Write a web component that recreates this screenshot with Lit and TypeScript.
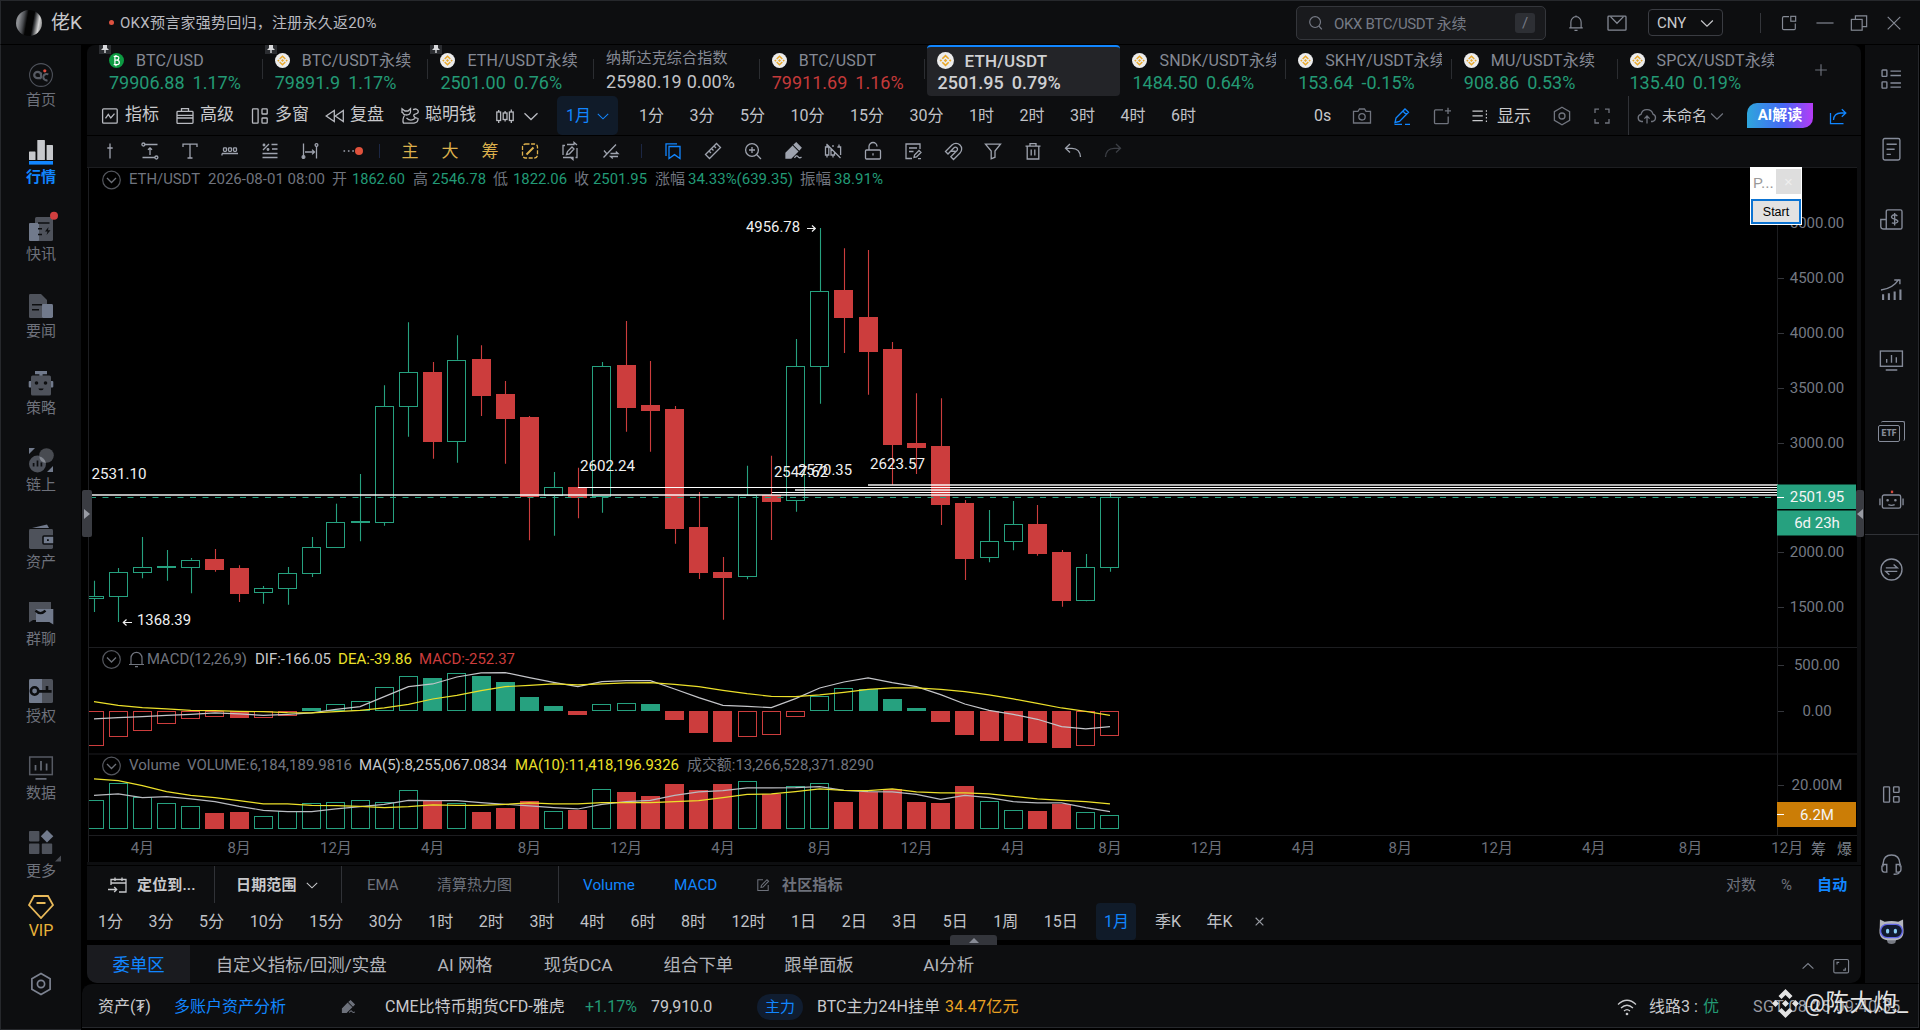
import { LitElement, html, svg, css } from "lit";
import { customElement } from "lit/decorators.js";

/* ---------- icons, drawn on a 20x20 grid ---------- */
const ICONS: Record<string, unknown> = {
  search: svg`<circle cx="9" cy="9" r="6"/><path d="M13.4 13.6L16.5 17"/>`,
  bell: svg`<path d="M2.5 15.5H17.5M4.3 15.5V9.2a5.7 6.2 0 0 1 11.4 0v6.3M8.3 18.2h3.4M10 3V1.6"/>`,
  mail: svg`<rect x="1" y="3.2" width="18" height="14" rx=".8"/><path d="M3.5 3.6L10 10.2L16.5 3.6"/>`,
  down: svg`<path d="M3.5 7.2L10 13.5L16.5 7.2"/>`,
  up: svg`<path d="M4 13L10 7.2L16 13"/>`,
  detach: svg`<path d="M10 3H4.2Q2.8 3 2.8 4.4V16Q2.8 17.3 4.2 17.3H15.8Q17 17.3 17 16V10.5"/><rect x="12" y="2.6" width="5.4" height="5.4"/>`,
  min: svg`<path d="M.5 10H19.5"/>`,
  restore: svg`<rect x="1.5" y="6" width="12" height="12"/><path d="M6 6V2H18.5V14H13.5"/>`,
  close: svg`<path d="M3 3.2L17 17M17 3.2L3 17"/>`,
  plus: svg`<path d="M10 3.5V16.5M3.5 10H16.5"/>`,
  indicator: svg`<rect x="2.6" y="2.8" width="14.6" height="14.4" rx="1"/><path d="M5.5 12.3L8.3 8.3L10.8 12L14.5 7.6"/>`,
  brief: svg`<rect x="2" y="5.4" width="16" height="12" rx=".8"/><path d="M6.5 5.2V2.6H13.5V5.2M2 9.3H18M2 12H18"/>`,
  windows: svg`<rect x="2.5" y="2.8" width="5.6" height="14.4" rx=".6"/><rect x="12" y="2.8" width="5.2" height="5.2" rx=".6"/><rect x="12" y="12" width="5.2" height="5.2" rx=".6"/>`,
  rewind: svg`<path d="M9.3 4.5V15.5L1.2 10ZM18.3 4.5V15.5L10.3 10Z"/>`,
  smart: svg`<path d="M2 7V2.8L5 5H8L10.5 2.8V6Q10 9 6.5 9T2.6 6M13 3.6q4-1.6 5 1t-2 3.2-2 2.6 3.4 1.6M4.5 9.5Q2 13.5 3.5 17.2H14Q18.5 16.5 18 12.2M6.5 12q4 4 8.5 .5"/>`,
  candles: svg`<rect x="1.8" y="6" width="3.8" height="8.5"/><rect x="8.2" y="7" width="3.8" height="6.5"/><rect x="14.4" y="6" width="3.8" height="8.5"/><path d="M3.7 4V6M3.7 14.5V17M10.1 5V7M10.1 13.5V15.5M16.3 3.5V6M16.3 14.5V17"/>`,
  camera: svg`<path d="M1.5 5.3H6L7.5 3H12.5L14 5.3H18.5V17H1.5Z"/><circle cx="10" cy="10.8" r="3.2"/>`,
  pen: svg`<path d="M4 12L13 3L16.5 6.2L7.5 15.4L3 16.5ZM11 5.2L14.3 8.5M2.5 18.3H10M13 18.3H18"/>`,
  notePlus: svg`<path d="M11 3.8H3.5Q2.5 3.8 2.5 5V16.5Q2.5 17.7 3.6 17.7H15Q16.2 17.7 16.2 16.5V10.5M16 1.8V8M12.9 4.9H19"/>`,
  list: svg`<path d="M.5 4.5H12M.5 9.8H12M.5 15.2H12"/><path stroke-dasharray="1.8 2" d="M16 3.5V17"/>`,
  hex: svg`<path d="M10 1.3L17.6 5.6V14.4L10 18.7L2.4 14.4V5.6Z"/><circle cx="10" cy="10" r="3"/>`,
  full: svg`<path d="M3 7V3.2H7M13 3.2H17V7M17 13V17H13M7 17H3V13"/>`,
  cloud: svg`<path d="M6 15.5H4.5A3.6 3.6 0 0 1 4 8.4 6.2 6.2 0 0 1 16 8.2 3.8 3.8 0 0 1 15.5 15.5H14M10 17.5V10.2M7.4 12.6L10 10L12.6 12.6"/>`,
  share: svg`<path d="M2.5 7V17.6H15.5M5.5 14Q6 7 13 7H17.6M13.8 3.2L17.8 7L13.8 10.8"/>`,
  cross: svg`<path d="M10 2.5V17.5M7.3 7H12.7"/>`,
  span: svg`<path d="M4.5 3.5H17.5M2.5 16.5H15M10 7V14M8 8.8L10 6.8L12 8.8"/><circle cx="3.4" cy="3.5" r="1.5"/><circle cx="16.4" cy="16.5" r="1.5"/>`,
  textT: svg`<path d="M3 6V3.2H17V6M10 3.2V17M7.5 17H12.5"/>`,
  brush: svg`<path d="M2 12.5H18M2 12.5V14.5"/><rect x="3.5" y="6.8" width="3" height="3.5" rx=".8"/><rect x="8.5" y="6.8" width="3" height="3.5" rx=".8"/><rect x="13.5" y="6.8" width="3" height="3.5" rx=".8"/>`,
  ratio: svg`<path d="M2.5 16.5H17.5M2.5 12.5H17.5M12 8H17.5M11.5 3.5H17.5M3 9L9 3"/><circle cx="4" cy="4" r=".8"/><circle cx="8" cy="8.5" r=".8"/>`,
  width: svg`<path d="M3.5 2.5V17.5M16.5 5V17.5M5 11H14.5M12 8.6L14.5 11L12 13.4"/><circle cx="3.5" cy="16" r="1.4"/><circle cx="16.5" cy="4" r="1.4"/>`,
  dots: svg`<path stroke-dasharray="1.6 2.8" d="M3.5 10H16"/>`,
  slashBox: svg`<rect x="2.5" y="3" width="15" height="14" rx="3" stroke-dasharray="4 1.6"/><path stroke-width="2" d="M6.5 13.5L13.5 6.5"/>`,
  copyPen: svg`<path d="M7 3.5H14V1.5L17 4M5 4.5H3V14M3 16.5H13V18.5L10 16M17 7V16.5H15.5M6.5 13.5L7.5 10.5L12 6L14 8L9.5 12.8Z"/>`,
  swapLine: svg`<path d="M3.5 16.5L16 3.5M10.5 12.5H18L15.8 10.5M18 15.5H10.5L12.8 17.5M4 9.5L7 13"/>`,
  bookmark: svg`<path d="M3 15V2.8H14"/><path d="M6 5.5H17V17.5L11.5 13.6L6 17.5Z"/>`,
  ruler: svg`<path d="M2.5 13.5L13.5 2.5L17.5 6.5L6.5 17.5ZM6 10L8 12M8.5 7.5L10.5 9.5M11 5L13 7"/>`,
  zoomIn: svg`<circle cx="9" cy="9" r="6.4"/><path d="M13.8 13.8L18 18M9 6V12M6 9H12"/>`,
  marker: svg`<path fill="currentColor" d="M9.6 5.4L14.6 10.4L8 17H3V12ZM11.2 3.8L13.2 2L18 6.8L16.2 8.8Z"/><path d="M11.5 17Q13.5 13.5 15 15.6T18.5 16"/>`,
  noCandle: svg`<path d="M2.5 6H5.8V14H2.5ZM4 4V6M4 14V16.5M8 7.5V14H11.5V11M10 14V16.5M10 4V6M14.4 6H17.6V14M16 3.5V6M3.5 3L17.5 17"/>`,
  lock: svg`<rect x="2.5" y="9" width="15" height="9" rx="1"/><path d="M6 9V5.5a4 4 0 0 1 8 0M10 12.2V14.6"/>`,
  noteEdit: svg`<path d="M17 8V3H3V17.5H9M6 7H14M6 10.5H10.5M11 16.5L11.5 14L16 9.5L18 11.5L13.5 16ZM15 17.7H18"/>`,
  magnet: svg`<path d="M2.5 10.5L9 4A5.6 5.6 0 0 1 17 12L10.5 18.5L7.8 15.8L14 9.5A2 2 0 0 0 11 6.8L5 13ZM8 10L13 10.5"/>`,
  funnel: svg`<path d="M2.5 3.2H17.5L12 10V16.2L8.2 17.8V10Z"/>`,
  trash: svg`<path d="M2.5 5.2H17.5M4.2 5.2V18H15.8V5.2M7 5V2.6H13V5M8.2 8.5V14.5M11.8 8.5V14.5"/>`,
  undo: svg`<path d="M7 3L2.5 7.3L7 11.5M2.8 7.3H9Q17 7.5 17.5 16"/>`,
  redo: svg`<path d="M13 3L17.5 7.3L13 11.5M17.2 7.3H11Q3 7.5 2.5 16"/>`,
  goto: svg`<path d="M3 10V4.5H18V17H11M3 8H18M7 2.5V6M14 2.5V6M0 14.5H8.5M6.2 12L8.7 14.5L6.2 17"/>`,
  editBox: svg`<path d="M10 3.5H3.5V17H16.5V10M7.5 13L8 10.5L15 3.3L17 5.2L10 12.5Z"/>`,
  expandBox: svg`<rect x="2" y="2.8" width="16.4" height="14.8" rx="1.6"/><path d="M5.6 8.4V6H8M14.8 12V14.5H12.3"/>`,
  wifi: svg`<path d="M1 7.5Q10-1 19 7.5M4 11Q10 5.5 16 11M7 14Q10 11.3 13 14"/><circle cx="10" cy="17" r=".7"/>`,
  /* right rail */
  rList: svg`<rect x="1" y="1" width="4.6" height="6" rx=".6"/><rect x="1" y="12.2" width="4.6" height="6" rx=".6"/><path d="M9 2H19M9 6.2H19M9 13.3H19M9 17.3H19"/>`,
  rDoc: svg`<rect x="2" y="-.5" width="16" height="20.5" rx="1.6"/><path d="M5.3 5H15M5.3 9.8H13M5.3 14.6H9.4"/>`,
  rMoney: svg`<path d="M5 18.7V2.5Q5 .8 6.6 .8H18.5Q20 .8 20 2.4V17.5Q20 19 18.4 19H2.4Q.2 19-.2 17V10H5"/><path d="M15.6 6.5Q12.6 4.5 10.6 6.4T13 9.7 15.5 12.6 10.3 13.2M13 3.8V15.6"/>`,
  rTrend: svg`<path stroke-width="2" d="M2 19V13.5M7.5 19V12.5M13 19V11M18.5 19V9"/><path d="M0 9.5Q11 8.5 17-.5M12.6 0H18V4"/>`,
  rScreen: svg`<rect x="-.6" y="1" width="21" height="14.5"/><path d="M5.4 8.5V12.2M10 4.8V12.2M14.6 7V12.2M4.5 19H15.5"/>`,
  rRobot: svg`<rect x="1.3" y="4.8" width="17.4" height="12.5" rx="1.6"/><path d="M-1 8V14.5M21 8V14.5M7 14Q10 15.4 13 14" /><circle cx="6.3" cy="9.8" r=".6"/><circle cx="13.7" cy="9.8" r=".6"/><path stroke="#d84a3e" stroke-width="2.2" d="M10.5 3V.6"/>`,
  rSwap: svg`<circle cx="10" cy="10" r="10"/><path d="M4.6 8.5H15.6L12 5.2M15.5 11.8H4.5L8 15"/>`,
  rHead: svg`<path d="M2 12V9Q2.5 1 10 1T18 9V12M1 10H5.5V17.2H3Q.9 17 .9 14.5V11M19 10H14.5V17.2H17Q19 17 19 14.5V11M17.5 17.2Q17 19.5 12 19.3"/>`,
  rFace: svg`<path fill="#777a83" stroke="none" d="M5 16H15L13.5 21Q10 23 6.5 21Z"/><path fill="#b4b6be" stroke="none" d="M-1-1.5L3.5 .6Q10-.8 16.5 .6L21-1.5L21.2 6Q23 17.5 14 18.3H6Q-3 17.5-1.2 6Z"/><rect x="-.4" y="3.2" width="20.8" height="12.6" rx="6.2" fill="#10192e" stroke="#6266e6" stroke-width="1.3"/><path stroke="#8ccdf2" stroke-width="3" stroke-linecap="round" d="M6.3 8.8V10.4M13.7 8.8V10.4"/>`,
};

const icon = (name: string, cls = "") =>
  html`<svg class="ic ${cls}" viewBox="0 0 20 20">${ICONS[name]}</svg>`;

/* ---------- left rail glyphs, 24x24 ---------- */
const D = "#4e525b";
const L = "#717a8c";
const K = "#0d0e10";
const RAIL: [string, unknown][] = [
  ["首页", svg`<circle cx="12" cy="12" r="11.4" fill="none" stroke="${D}" stroke-width="1.1"/><path d="M12 15.5V9.5M12 12a3.4 3.2 0 1 0-3.4 3.2H12" fill="none" stroke="#575b64" stroke-width="2.2"/><path d="M19.3 11.5A3.2 3.2 0 1 0 18.5 17.2" fill="none" stroke="#575b64" stroke-width="2"/><circle cx="15.8" cy="7.8" r="1.6" fill="#e04a3c"/>`],
  ["行情", svg`<rect x="0" y="11.5" width="6.5" height="8.5" rx=".6" fill="#c6c8cc"/><rect x="8.3" y="0" width="7.6" height="20" rx=".6" fill="#c6c8cc"/><rect x="17.6" y="5" width="6.4" height="15" rx=".6" fill="#c6c8cc"/><rect x="0" y="21" width="24" height="3.6" fill="#1186ff"/>`],
  ["快讯", svg`<rect x="6" y="0" width="18" height="24" rx="1.5" fill="${D}"/><rect x="0" y="6" width="10" height="18" rx="1" fill="${L}"/><path d="M9 6H20.5M9 11.7H13M9 17.5H13" stroke="${K}" stroke-width="1.6"/><path d="M19.5 10L16 14.6H18.5L17.5 18L21.5 13.2H19Z" fill="${K}"/><circle cx="25" cy="-1.3" r="4" fill="#d23f3f"/>`],
  ["要闻", svg`<path d="M1.2 0H12L18 6V24H1.2Q0 24 0 22.8V1.2Q0 0 1.2 0Z" fill="${D}"/><rect x="13" y="10" width="11" height="14" rx="1.4" fill="${L}"/><path d="M3 10.8H13M3 15.8H10" stroke="${K}" stroke-width="1.5"/>`],
  ["策略", svg`<path d="M6 1.6H18M12 1V5" stroke="${L}" stroke-width="3.2"/><rect x="-.3" y="10" width="24.6" height="6.5" rx="1" fill="${L}"/><rect x="2" y="4.6" width="20" height="20" rx="1.6" fill="${D}"/><circle cx="7.5" cy="12" r="1.8" fill="${K}"/><circle cx="16.5" cy="12" r="1.8" fill="${K}"/><path d="M9.3 17.4H14.7Q14 19.3 12 19.3T9.3 17.4Z" fill="${K}"/>`],
  ["链上", svg`<circle cx="17.5" cy="7.5" r="7.3" fill="#484b51"/><circle cx="8.5" cy="16" r="8.5" fill="${D}"/><path d="M10.3 8.5A7.3 7.3 0 0 0 16.8 15A8.5 8.5 0 0 0 10.3 8.5Z" fill="#858991"/><path d="M0 0H6L0 6ZM24 24V18L18 24Z" fill="${L}"/><path d="M4.6 18.5V15M8.5 18.5V12.5M12.4 18.5V14.6" stroke="${K}" stroke-width="1.7"/>`],
  ["资产", svg`<path d="M3 3L18-.6L20 3Z" fill="${L}"/><rect x="0" y="4" width="24" height="20" rx="1.4" fill="${D}"/><rect x="14" y="11" width="11" height="8" rx="1" fill="${L}" stroke="${K}" stroke-width="1.6"/><rect x="18" y="14.2" width="1.8" height="1.8" fill="${K}"/>`],
  ["群聊", svg`<path d="M0 0H22V18H4L0 20.4Z" fill="${D}"/><path d="M7 7H24.3V22.4L20.3 20H7Z" fill="${L}"/><path d="M6.5 8.6Q11.5 13.6 16.5 8.6" fill="none" stroke="${K}" stroke-width="2.3"/>`],
  ["授权", svg`<rect x="0" y="0" width="24" height="24" rx="1.6" fill="${D}"/><path d="M1.5 0H13V24H1.5Q0 24 0 22.5V1.5Q0 0 1.5 0Z" fill="${L}"/><circle cx="5.6" cy="12" r="3.7" fill="none" stroke="${K}" stroke-width="2.6"/><path d="M9 12.4H22.6M18 12V7" stroke="${K}" stroke-width="2.6"/>`],
  ["数据", svg`<rect x=".7" y="1" width="22.6" height="17.6" fill="none" stroke="#565a63" stroke-width="1.5"/><path d="M6.5 9V14.6M12 5V14.6M17.6 7.6V14.6M6.5 22.8H17.5" stroke="#656a75" stroke-width="1.7"/>`],
  ["更多", svg`<rect x="0" y="0" width="10.4" height="10.4" rx=".8" fill="${D}"/><rect x="0" y="12.6" width="10.4" height="10.4" rx=".8" fill="${D}"/><rect x="12.8" y="12.6" width="10.4" height="10.4" rx=".8" fill="${D}"/><path d="M18-1L24.3 5.2L18 11.4L11.8 5.2Z" fill="${L}"/><path d="M32 24.5V30.5H26Z" fill="#4a4d54"/>`],
];

/* ---------- market tabs ---------- */
type Tab = { name: string; price: string; pct: string; tone: string; kind: string; pin?: boolean };
const TABS: Tab[] = [
  { name: "BTC/USD", price: "79906.88", pct: "1.17%", tone: "g", kind: "bitstamp", pin: true },
  { name: "BTC/USDT永续", price: "79891.9", pct: "1.17%", tone: "g", kind: "bnb", pin: true },
  { name: "ETH/USDT永续", price: "2501.00", pct: "0.76%", tone: "g", kind: "bnb", pin: true },
  { name: "纳斯达克综合指数", price: "25980.19", pct: "0.00%", tone: "w", kind: "" },
  { name: "BTC/USDT", price: "79911.69", pct: "1.16%", tone: "r", kind: "bnb" },
  { name: "ETH/USDT", price: "2501.95", pct: "0.79%", tone: "w", kind: "active" },
  { name: "SNDK/USDT永续", price: "1484.50", pct: "0.64%", tone: "g", kind: "bnb" },
  { name: "SKHY/USDT永续", price: "153.64", pct: "-0.15%", tone: "g", kind: "bnb" },
  { name: "MU/USDT永续", price: "908.86", pct: "0.53%", tone: "g", kind: "bnb" },
  { name: "SPCX/USDT永续", price: "135.40", pct: "0.19%", tone: "g", kind: "bnb" },
];

const coin = (kind: string) =>
  kind === "bitstamp"
    ? html`<svg class="coin" viewBox="0 0 16 16"><circle cx="8" cy="8" r="8" fill="#0d9a42"/><path d="M5 3.5H8.6Q10.6 3.6 10.5 5.5T8.4 7.6H6.3M8.4 7.6Q11 7.7 11 10T8.6 12.3H5M6.3 3.5V12.3M7.4 2V3.6M7.4 12.3V14" fill="none" stroke="#fff" stroke-width="1.3"/></svg>`
    : html`<svg class="coin" viewBox="0 0 16 16"><circle cx="8" cy="8" r="8" fill="#ececec"/><g fill="none" stroke="#e8a82c" stroke-width="1.5"><path d="M5 6.4L8 3.4L11 6.4M5 9.6L8 12.6L11 9.6"/></g><path fill="#e8a82c" d="M8 6.4L9.6 8L8 9.6L6.4 8ZM3.6 6.8L4.8 8L3.6 9.2L2.4 8ZM12.4 6.8L13.6 8L12.4 9.2L11.2 8Z"/></svg>`;

/* ---------- chart data: y values are thirds of a pixel below each pane's origin ---------- */
const UP = "#26a17f";
const DN = "#cc3d3d";
const X0 = 94;
const STEP = 24.19;
const BODY = 18.4;
const cx = (i: number) => X0 + STEP * i;

// [high, body top, body bottom, low, rising]
const CANDLES: number[][] = [
  [1142, 1188, 1196, 1236, 1], [1104, 1117, 1189, 1266, 1], [1011, 1102, 1118, 1135, 1], [1050, 1098, 1102, 1142, 1],
  [1074, 1079, 1103, 1180, 1], [1047, 1078, 1108, 1115, 0], [1096, 1104, 1179, 1206, 0], [1158, 1165, 1178, 1211, 1],
  [1101, 1120, 1166, 1214, 1], [1011, 1042, 1121, 1131, 1], [911, 967, 1042, 1042, 1], [822, 963, 967, 1024, 1],
  [556, 619, 967, 977, 1], [367, 517, 619, 710, 1], [486, 516, 725, 776, 0], [406, 479, 724, 788, 1],
  [436, 477, 587, 648, 0], [543, 582, 654, 791, 0], [648, 651, 890, 1021, 0], [816, 862, 887, 1007, 1],
  [803, 861, 891, 955, 0], [486, 498, 888, 938, 1], [363, 496, 621, 695, 0], [483, 616, 632, 755, 0],
  [618, 628, 984, 1031, 0], [876, 981, 1118, 1137, 0], [1071, 1116, 1131, 1259, 0], [797, 885, 1130, 1138, 1],
  [767, 885, 903, 1020, 0], [417, 498, 900, 935, 1], [84, 273, 499, 611, 1], [145, 271, 353, 459, 0],
  [150, 351, 453, 584, 0], [426, 447, 732, 854, 0], [580, 729, 741, 822, 0], [595, 738, 912, 975, 0],
  [900, 909, 1074, 1140, 0], [930, 1023, 1073, 1087, 1], [903, 973, 1025, 1051, 1], [915, 972, 1059, 1067, 0],
  [1050, 1056, 1202, 1220, 0], [1062, 1102, 1200, 1204, 1], [879, 891, 1103, 1115, 1],
];

// [bar end, filled]
const MACD: number[][] = [
  [317, 0], [290, 0], [271, 0], [252, 0], [237, 0], [230, 0], [234, 1], [233, 0], [227, 0], [204, 1], [193, 0],
  [183, 0], [142, 0], [108, 0], [114, 1], [99, 0], [107, 1], [126, 1], [171, 1], [197, 1], [224, 1], [193, 0],
  [189, 0], [193, 1], [239, 1], [279, 1], [306, 1], [291, 0], [283, 0], [231, 0], [168, 0], [145, 0], [147, 1],
  [178, 1], [205, 1], [246, 1], [283, 1], [303, 1], [303, 1], [309, 1], [324, 1], [318, 0], [288, 0],
];
const DIF = [236, 232, 229, 225, 222, 218, 221, 225, 222, 218, 207, 199, 169, 139, 131, 110, 98, 97, 112, 126, 139, 124, 121, 121, 146, 172, 195, 198, 202, 175, 143, 125, 113, 127, 139, 163, 191, 210, 222, 237, 259, 266, 259];
const DEA = [184, 195, 202, 206, 210, 211, 213, 214, 217, 218, 214, 210, 203, 192, 176, 165, 151, 139, 135, 131, 134, 131, 128, 127, 132, 139, 150, 160, 168, 169, 164, 156, 147, 143, 143, 147, 154, 164, 176, 189, 203, 213, 225];
const VOL = [480, 430, 472, 490, 499, 519, 516, 528, 514, 490, 487, 479, 487, 449, 482, 490, 516, 504, 484, 514, 510, 446, 457, 468, 433, 449, 433, 424, 461, 438, 430, 486, 455, 447, 486, 489, 438, 484, 510, 513, 492, 517, 524];
const MA5 = [465, 461, 472, 469, 476, 484, 498, 510, 514, 514, 506, 499, 492, 480, 481, 481, 487, 492, 497, 502, 506, 492, 484, 480, 465, 455, 451, 443, 443, 442, 439, 450, 454, 455, 462, 477, 465, 472, 484, 488, 488, 502, 514];
const MA10 = [416, 421, 436, 454, 465, 472, 481, 491, 491, 495, 496, 498, 502, 499, 494, 495, 495, 492, 488, 491, 491, 487, 487, 487, 484, 481, 472, 462, 461, 454, 446, 450, 451, 446, 455, 458, 458, 461, 468, 476, 480, 484, 491];

const priceY = (v: number) => 200 + v / 3;
const paneY = (v: number) => 640 + v / 3;
const line = (vals: number[], color: string) =>
  svg`<polyline fill="none" stroke="${color}" stroke-width="1.2" points="${vals.map((v, i) => `${cx(i)},${paneY(v) + 0.3}`).join(" ")}"/>`;

const bar = (i: number, top: number, bottom: number, color: string, filled: boolean) => {
  const x = Math.round(cx(i) - BODY / 2 - 0.3);
  const t = Math.round(top);
  const h = Math.max(Math.round(bottom) - t, 2);
  return filled
    ? svg`<rect x="${x}" y="${t}" width="19" height="${h}" fill="${color}"/>`
    : svg`<rect x="${x + 0.5}" y="${t + 0.5}" width="18" height="${Math.max(h - 1, 1)}" fill="none" stroke="${color}"/>`;
};

const label = (x: number, y: number, w: number, text: string, color: string) =>
  svg`<text x="${x}" y="${y}" textLength="${w}" lengthAdjust="spacingAndGlyphs" fill="${color}">${text}</text>`;

const MUTED = "#70747e";
const HEAD: [number, number, string, string][] = [
  [129, 71, "ETH/USDT", MUTED], [208, 117, "2026-08-01 08:00", MUTED],
  [332, 15, "开", MUTED], [352, 53, "1862.60", "#229a76"],
  [413, 15, "高", MUTED], [432, 54, "2546.78", "#229a76"],
  [493, 15, "低", MUTED], [513, 54, "1822.06", "#229a76"],
  [574, 15, "收", MUTED], [593, 54, "2501.95", "#229a76"],
  [655, 30, "涨幅", MUTED], [688, 105, "34.33%(639.35)", "#229a76"],
  [800, 31, "振幅", MUTED], [834, 49, "38.91%", "#229a76"],
];

@customElement("price-chart")
export class PriceChart extends LitElement {
  static styles = css`
    :host { display: block; }
    svg { display: block; width: 1774px; height: 698px; font: 15px Roboto, "Noto Sans CJK SC", sans-serif; }
    .mid { text-anchor: middle; }
  `;

  render() {
    const months = ["4月", "8月", "12月"];
    const ticks: [number, string][] = [
      [222.8, "5000.00"], [278, "4500.00"], [333, "4000.00"], [388, "3500.00"], [443, "3000.00"],
      [552, "2000.00"], [607, "1500.00"], [665, "500.00"], [711, "0.00"], [784.5, "20.00M"],
    ];
    const circle = (y: number) => svg`<circle cx="111.5" cy="${y}" r="8.8" fill="none" stroke="#53565d" stroke-width="1.2"/><path d="M107 ${y - 2}L111.5 ${y + 2.5}L116 ${y - 2}" fill="none" stroke="#6c7078" stroke-width="1.3"/>`;
    return html`<svg viewBox="87 167 1774 698">
      <rect x="87" y="167" width="1774" height="698" fill="#0d0e10"/>
      <rect x="87" y="167" width="1770" height="695" fill="#000"/>
      <path d="M88.5 167V862M1777.5 167V835M87 167.5H1857M89 647.5H1857M89 754H1857M89 835.5H1857" stroke="#1c1d20" fill="none"/>
      <clipPath id="plot"><rect x="89" y="168" width="1689" height="667"/></clipPath>
      <g clip-path="url(#plot)">
        ${CANDLES.map(([h, t, b, l, up], i) => {
          const c = up ? UP : DN;
          return svg`<path d="M${Math.round(cx(i)) + 0.5} ${priceY(h)}V${priceY(t)}M${Math.round(cx(i)) + 0.5} ${priceY(b)}V${priceY(l)}" stroke="${c}" stroke-width="1.1"/>${bar(i, priceY(t), priceY(b) + 0.6, c, !up)}`;
        })}
        ${MACD.map(([e, f], i) => (e < 212 ? bar(i, paneY(e), 711, UP, !!f) : bar(i, 711, paneY(e) + 0.4, DN, !!f)))}
        ${line(DIF, "#c4c5c9")}${line(DEA, "#ece02a")}
        ${VOL.map((v, i) => bar(i, paneY(v), 829.4, CANDLES[i][4] ? UP : DN, !CANDLES[i][4]))}
        ${line(MA5, "#b9bbc0")}${line(MA10, "#ece02a")}
        <path d="M92 497.5H1778" stroke="#26a17f" stroke-dasharray="6 6.5" stroke-dashoffset="2"/>
        <path d="M92 495H1778M795 490H1778M868 485H1778" stroke="#fff" stroke-width="2" stroke-opacity=".7"/>
        <path d="M578 487.5H1778M772 492.5H1778" stroke="#fff"/>
      </g>
      ${circle(180)}
      ${HEAD.map(([x, w, t, c]) => label(x, 184, w, t, c))}
      ${circle(659.5)}
      <path d="M129 664.5H144M131 664.5V658a5.5 5.7 0 0 1 11 0V664.5M135 666.6H138" fill="none" stroke="#70747e" stroke-width="1.2"/>
      ${label(147, 663.5, 100, "MACD(12,26,9)", MUTED)}
      ${label(255, 663.5, 76, "DIF:-166.05", "#c9cacc")}
      ${label(338, 663.5, 74, "DEA:-39.86", "#ece02a")}
      ${label(419, 663.5, 96, "MACD:-252.37", DN)}
      ${circle(766)}
      ${label(129, 769.5, 51, "Volume", MUTED)}
      ${label(187, 769.5, 165, "VOLUME:6,184,189.9816", MUTED)}
      ${label(359, 769.5, 148, "MA(5):8,255,067.0834", "#c9cacc")}
      ${label(515, 769.5, 164, "MA(10):11,418,196.9326", "#ece02a")}
      ${label(687, 769.5, 187, "成交额:13,266,528,371.8290", MUTED)}
      ${label(91.5, 479, 55, "2531.10", "#f0f0f0")}
      ${label(580, 471, 55, "2602.24", "#f0f0f0")}
      ${label(774, 477, 54, "2547.62", "#f0f0f0")}
      ${label(798, 475, 54, "2570.35", "#f0f0f0")}
      ${label(870, 469, 55, "2623.57", "#f0f0f0")}
      ${label(746, 232, 54, "4956.78", "#f0f0f0")}
      ${label(137, 625, 54, "1368.39", "#f0f0f0")}
      <path d="M807 228.5H815M812 225.5L815.3 228.5L812 231.5M132 622.5H123.5M126.5 619.5L123.3 622.5L126.5 625.5" fill="none" stroke="#f0f0f0" stroke-width="1.2"/>
      ${Array.from({ length: 18 }, (_, k) => svg`<text class="mid" x="${cx(2 + 4 * k)}" y="853" fill="#6b6f79">${months[k % 3]}</text>`)}
      <text x="1811" y="854" fill="#7b808a">筹</text><text x="1837" y="854" fill="#7b808a">爆</text>
      ${ticks.map(([y, t]) => svg`<path d="M1778 ${Math.round(y) + 0.5}H1784" stroke="#34363b"/><text class="mid" x="1817" y="${y + 5.2}" fill="#747983">${t}</text>`)}
      <rect x="1777" y="484.5" width="79" height="24.5" fill="${UP}"/>
      <rect x="1777" y="510.5" width="79" height="25" fill="${UP}"/>
      <rect x="1777" y="802" width="79" height="25" fill="#cb7d06"/>
      <path d="M1777 497.5H1784M1777 814.5H1784" stroke="#fff"/>
      <text class="mid" x="1817" y="502" fill="#f4f4f4">2501.95</text>
      <text class="mid" x="1817" y="528.3" fill="#f4f4f4">6d 23h</text>
      <text class="mid" x="1817" y="819.5" fill="#f4f4f4">6.2M</text>
    </svg>`;
  }
}

const PERIODS = ["1分", "3分", "5分", "10分", "15分", "30分", "1时", "2时", "3时", "4时", "6时"];
const PERIODS2 = [...PERIODS, "8时", "12时", "1日", "2日", "3日", "5日", "1周", "15日"];

@customElement("app-root")
export class AppRoot extends LitElement {
  static styles = css`
    :host { display: block; width: 1920px; height: 1030px; overflow: hidden; position: relative; background: #000; color: #c8c9cc;
      font: 16px/20px Roboto, "Noto Sans CJK SC", sans-serif; }
    * { box-sizing: border-box; white-space: nowrap; }
    .ic { display: block; width: 20px; height: 20px; fill: none; stroke: currentColor; stroke-width: 1.3; overflow: visible; flex: none; }
    .s18 { width: 18px; height: 18px; }
    .s16 { width: 16px; height: 16px; }
    .s24 { width: 24px; height: 24px; stroke-width: 1.4; }
    .s10 { width: 11px; height: 11px; stroke-width: 2; margin-left: -4px; color: #9a9da5; }
    .blue { color: #1186ff; }
    .gold { color: #dcb04c; }
    .dim { color: #6d717b; }
    .faint { color: #3c3f45; }
    .g { color: #239a75; }
    .r { color: #c43a3a; }
    .w { color: #c3c4c7; }
    .amber { color: #eba423; letter-spacing: .2px; }
    .bold { font-weight: 600; }
    .frame { height: 1030px; display: grid; grid-template: 44px 985px 1px / 81px 1837px 2px; border-top: 0; }
    .row { display: grid; align-items: center; }

    .top { grid-column: 1 / 4; border-top: 1px solid #26282c; border-left: 1px solid #26282c; background: #0d0e10; padding-left: 15px;
      grid-template-columns: 35px 58px 11px 1176px 250px 21px 20px 20px 20px 21px 75px 37px 20px 20px 16px 34px 20px 15px 20px; color: #858a95; }
    .avatar { width: 26px; height: 26px; border-radius: 50%; background: linear-gradient(100deg, #8d8f93 0 14%, #4a4c50 30%, #050505 42% 62%, #3b3d40 68%, #d5d5d5 82%, #666 100%); }
    .brand { font-size: 19px; color: #c8c9cc; }
    .dot { width: 5px; height: 5px; border-radius: 50%; background: #de5240; }
    .notice { font-size: 15px; letter-spacing: .25px; color: #b9bac0; }
    .search { height: 34px; border: 1px solid #34363b; border-radius: 5px; background: #191a1d; padding: 0 10px; display: flex; align-items: center; font-size: 15px; color: #767a85; }
    .search .ic { margin-right: 9px; }
    .search span:not(.key) { letter-spacing: -.35px; padding-top: 3px; }
    .key { margin-left: auto; width: 20px; height: 20px; border-radius: 3px; background: #2d2f34; text-align: center; }
    .cny { height: 27px; border: 1px solid #3a3c42; border-radius: 4px; padding: 0 6px 0 8px; display: flex; align-items: center; justify-content: space-between; font-size: 15px; color: #c8c9cc; }
    .vline { width: 1px; height: 20px; background: #34363b; }

    .rail { grid-row: 2 / 4; border-left: 1px solid #26282c; border-bottom: 1px solid #26282c; border-top: 1px solid #000; background: #0d0e10; padding-top: 4px; display: flex; flex-direction: column; font-size: 15px; color: #6d717b; }
    .railitem { height: 77px; display: flex; flex-direction: column; align-items: center; padding-top: 14px; gap: 2.5px; flex: none; }
    .railitem svg { width: 24px; height: 24px; overflow: visible; flex: none; }
    .railitem:nth-child(2) { color: #1186ff; font-weight: 700; }
    .railitem:nth-child(11) { padding-top: 12px; gap: 6px; }
    .vip { height: 64px; flex: none; display: flex; flex-direction: column; align-items: center; gap: 2px; color: #e8b33a; font-size: 16px; margin-top: -1px; }
    .vip svg { width: 26px; height: 24px; }
    .gear { display: flex; justify-content: center; padding-top: 13px; color: #7c8290; }

    .stage { display: grid; grid-template: 939px 46px / 1783px 54px; padding-left: 1px; width: 1837px; }
    .center { padding: 1px 0 0 5px; width: 1779px; position: relative; }
    .panel { background: #0d0e10; }
    .head { width: 1774px; border-radius: 8px 8px 0 0; }

    .tabs { height: 51px; display: flex; padding-left: 10px; }
    .tab { width: 165.7px; height: 51px; display: grid; grid-template: 29px 18px / 27px 117px; padding: 1px 0 0 12px; position: relative; align-items: center; }
    .tab::after { content: ""; position: absolute; right: 0; top: 14px; height: 20px; width: 1px; background: #2b2d31; }
    .tab:nth-child(10)::after { display: none; }
    .tab .name { overflow: hidden; color: #858994; height: 22px; line-height: 22px; letter-spacing: .2px; }
    .tab .val { grid-column: 1 / 3; font-size: 18px; display: flex; gap: 8px; margin-top: -2px; }
    .tab .coin { width: 15px; height: 15px; }
    .tab.plain .name { grid-column: 1 / 3; font-size: 15px; margin-top: -5px; }
    .tab.plain .val { gap: 5px; margin-top: -4px; }
    .tab.active { width: 193px; background: #232428; border-top: 2px solid #1186ff; border-radius: 4px; padding: 0 0 0 10px; margin-left: 2px; margin-right: 0; grid-template-rows: 27px 20px; }
    .tab.active::after { display: none; }
    .tab.active .coin { width: 17px; height: 17px; }
    .tab.active .name, .tab.active .val { color: #cfd0d3; font-weight: 500; }
    .tab.active .name { font-size: 17px; }
    .pin { position: absolute; left: 2px; top: 0; width: 12px; height: 9px; background: #2b2d31; }
    .add { margin: 16px 0 0 29px; color: #6d717b; }

    .bar1 { height: 39px; padding: 0 13px; display: flex; align-items: center; }
    .menus { grid-template-columns: 25px 50px 25px 50px 25px 50px 25px 50px 25px 70px 26px 36px 61px; font-size: 17px; }
    .menus .ic { color: #b8bac0; }
    .menus > span { margin-top: -3px; }
    .cur { height: 39px; border-radius: 5px; background: #101b29; display: flex; align-items: center; justify-content: space-between; padding: 0 7px 0 9px; font-size: 16px; color: #1186ff; }
    .menus .cur .ic { color: #1186ff; }
    .times { display: flex; gap: 25.5px; padding-left: 21px; color: #c0c2c7; }
    .acts { margin-left: auto; grid-template-columns: 38px 40px 40px 40px 26px 54px 40px 36px 34px 46px 39px 81px 20px; color: #70747e; }
    .acts .lt { color: #c8c9cc; }
    .show { font-size: 17px; margin-left: -1px; }
    .unnamed { font-size: 15px; }
    .cloud { height: 39px; border-left: 1px solid #303237; display: flex; align-items: center; padding-left: 8px; }
    .ai { width: 66px; height: 25px; border-radius: 10px 0 10px 0; background: linear-gradient(90deg, #2ea6dc, #4668f5 55%, #b63bf6); color: #fff; font-weight: 700; font-size: 15px; line-height: 25px; text-align: center; }

    .bar2 { height: 32px; border-top: 1px solid #000; padding-left: 3px; padding-bottom: 1px; display: flex; align-items: center; color: #9ea3ae; }
    .cell { width: 40px; display: flex; justify-content: center; font-size: 17px; position: relative; }
    .sep { width: 1px; height: 14px; margin: 0 10px 0 9px; background: #1c2744; }
    .sep2 { margin: 0 11px; }
    .red { position: absolute; left: 25px; top: 6px; width: 8px; height: 8px; border-radius: 50%; background: #e0523c; }

    .popup { position: absolute; left: 1668px; top: 123px; width: 52px; height: 58px; background: #fff; padding: 2px 1px 1px 1px; font-family: "Liberation Sans", sans-serif; }
    .ptitle { height: 30px; display: flex; justify-content: space-between; color: #999; font-size: 15px; line-height: 28px; padding-left: 2px; }
    .px { width: 25px; height: 25px; background: #dedede; color: #eee; text-align: center; line-height: 25px; }
    .start { height: 25px; border: 2px solid #0b73d2; background: #e2e2e2; color: #000; font-size: 12.5px; line-height: 22px; text-align: center; }
    .handle { position: absolute; width: 10px; height: 47px; top: 446px; background: #3a3c42; border-radius: 2px; display: flex; align-items: center; justify-content: center; }
    .handle svg { width: 6px; height: 10px; }
    .hl { left: 0; }
    .hr { left: 1774px; width: 8px; }

    .low { width: 1774px; margin-top: 1px; height: 74px; position: relative; }
    .lrow1 { height: 37px; padding-left: 21px; grid-template-columns: 29px 77px 22px 68px 37px 26px 70px 121px 25px 91px 81px 27px 944px 55px 36px 32px; font-size: 15px; }
    .lrow1 .bold { letter-spacing: .15px; }
    .lrow1 .vl { width: 1px; height: 37px; background: #303237; }
    .lrow1 > .blue:not(.bold) { font-size: 15.3px; }
    .lrow2 { height: 37px; display: flex; align-items: center; gap: 25.55px; padding-left: 11px; color: #c0c2c7; }
    .lcur { width: 40px; height: 37px; line-height: 37px; text-align: center; background: #101b29; border-radius: 4px; color: #1186ff; margin: 0 -7px 0 -7px; }
    .grip { position: absolute; left: 863px; top: 69px; width: 47px; height: 10px; background: #33353b; border-radius: 3px 3px 0 0; display: flex; align-items: center; justify-content: center; }
    .grip svg { width: 10px; height: 5px; }

    .btabs { width: 1774px; margin-top: 5px; height: 38px; display: flex; align-items: center; border-radius: 0 0 10px 10px; overflow: hidden; font-size: 17.4px; color: #b2b4ba; padding-right: 11px; }
    .btab { padding: 0 25.5px; height: 38px; line-height: 40px; }
    .btab:first-child { background: #1a1b1f; color: #1186ff; }
    .btab:nth-child(7) { margin-left: 18.5px; }
    .btools { margin-left: auto; display: flex; gap: 15px; color: #7c818c; padding-top: 4px; }

    .side { background: #0d0e10; border-right: 1px solid #26282c; margin-top: 1px; display: flex; flex-direction: column; align-items: center; color: #858b99; }
    .si { height: 70.2px; display: flex; align-items: center; flex: none; padding-bottom: 1px; }
    .si:last-child { padding-bottom: 6px; }
    .si .ic { width: 21px; height: 21px; }
    .etf { width: 24px; height: 20px; border-top: 1.5px solid; border-right: 1.5px solid; border-radius: 2px; display: flex; align-items: flex-end; margin-right: -3px; }
    .etf span { width: 22px; height: 17px; margin: 0 0 -1px -3px; border: 1.5px solid; border-radius: 2px; font-size: 8.5px; line-height: 14px; font-weight: 900; text-align: center; background: #0d0e10; }
    .split { width: 54px; height: 1px; background: #303237; margin: -2px 0 0; flex: none; }
    .gap { height: 154px; flex: none; }

    .status { grid-column: 1 / 3; height: 45px; border-top: 1px solid #000; border-radius: 10px 0 0 0; background: #0d0e10; border-bottom: 1px solid #26282c; border-right: 1px solid #26282c;
      grid-template-columns: 76px 166px 45px 200px 66px 106px 60px 128px 672px 32px 54px 50px 150px; padding: 3px 0 0 16px; }
    .pill { width: 46px; height: 26px; border-radius: 13px; background: #101d30; color: #1186ff; font-size: 15px; line-height: 26px; text-align: center; }
    .clock { color: #9a9da5; letter-spacing: .45px; }
    .mark { position: absolute; left: 1772px; top: 988px; display: flex; align-items: center; gap: 5px; font-size: 23.5px; line-height: 30px; color: #e3e3e3; }
    .mark span { letter-spacing: .5px; }
    .mark svg { width: 27px; height: 29px; }
  `;

  private tab(t: Tab) {
    const cls = t.kind === "active" ? "active" : t.kind ? "" : "plain";
    return html`<div class="tab ${cls}">
      ${t.pin ? html`<svg class="pin" viewBox="0 0 12 9"><path fill="#d8d9dc" d="M4 0H8V3L10 5H6.7V8H5.3V5H2L4 3Z"/></svg>` : ""}
      ${t.kind ? coin(t.kind) : ""}<div class="name">${t.name}</div>
      <div class="val ${t.tone}"><span>${t.price}</span><span>${t.pct}</span></div>
    </div>`;
  }

  render() {
    const tools = ["cross", "span", "textT", "brush", "ratio", "width"];
    const tools2 = ["ruler", "zoomIn", "marker", "noCandle", "lock", "noteEdit", "magnet", "funnel", "trash", "undo"];
    return html`<div class="frame">
      <header class="top row">
        <div class="avatar"></div><div class="brand">佬K</div><div class="dot"></div>
        <div class="notice">OKX预言家强势回归，注册永久返20%</div>
        <div class="search">${icon("search", "s18")}<span>OKX BTC/USDT 永续</span><span class="key">/</span></div>
        <span></span>${icon("bell", "s18")}<span></span>${icon("mail")}<span></span>
        <div class="cny"><span>CNY</span>${icon("down", "s18")}</div>
        <span></span><div class="vline"></div>${icon("detach", "s18")}<span></span>${icon("min", "s18")}
        ${icon("restore", "s18")}<span></span>${icon("close", "s18")}
      </header>

      <nav class="rail">
        ${RAIL.map(([t, g]) => html`<div class="railitem"><svg viewBox="0 0 24 24">${g}</svg><span>${t}</span></div>`)}
        <div class="vip"><svg viewBox="0 0 26 24" fill="none" stroke="#e8b95a" stroke-width="1.8"><path d="M6 1H20L25 10L13 23L1 10ZM8.5 8H17.5"/></svg><span>VIP</span></div>
        <div class="gear">${icon("hex", "s24")}</div>
      </nav>

      <div class="stage">
        <main class="center">
          <div class="panel head">
            <div class="tabs">${TABS.map((t) => this.tab(t))}<div class="add">${icon("plus", "s18")}</div></div>
            <div class="bar1">
              <div class="menus row">
                ${icon("indicator")}<span>指标</span>${icon("brief")}<span>高级</span>${icon("windows")}<span>多窗</span>
                ${icon("rewind")}<span>复盘</span>${icon("smart")}<span>聪明钱</span>${icon("candles")}${icon("down")}
                <div class="cur"><span>1月</span>${icon("down", "s16")}</div>
              </div>
              <div class="times">${PERIODS.map((p) => html`<span>${p}</span>`)}</div>
              <div class="acts row">
                <span class="lt">0s</span>${icon("camera")}${icon("pen", "blue")}${icon("notePlus")}${icon("list", "s18 lt")}
                <span class="lt show">显示</span>${icon("hex")}${icon("full")}<div class="cloud">${icon("cloud")}</div>
                <span class="lt unnamed">未命名</span>${icon("down", "s18")}<div class="ai">AI解读</div>${icon("share", "blue")}
              </div>
            </div>
            <div class="bar2">
              ${tools.map((n) => html`<div class="cell">${icon(n)}</div>`)}
              <div class="cell">${icon("dots")}<i class="red"></i></div><i class="sep"></i>
              ${["主", "大", "筹"].map((n) => html`<div class="cell gold">${n}</div>`)}
              <div class="cell gold">${icon("slashBox")}</div><div class="cell">${icon("copyPen")}</div><div class="cell">${icon("swapLine")}</div>
              <i class="sep sep2"></i><div class="cell blue">${icon("bookmark")}</div>
              ${tools2.map((n) => html`<div class="cell">${icon(n)}</div>`)}
              <div class="cell faint">${icon("redo")}</div>
            </div>
          </div>
          <price-chart></price-chart>
          <div class="popup"><div class="ptitle"><span>P...</span><span class="px">×</span></div><div class="start">Start</div></div>
          <div class="handle hl"><svg viewBox="0 0 6 10"><path fill="#989ba3" d="M0 0L6 5L0 10Z"/></svg></div>
          <div class="handle hr"><svg viewBox="0 0 6 10"><path fill="#989ba3" d="M6 0L0 5L6 10Z"/></svg></div>
          <section class="low panel">
            <div class="lrow1 row">
              ${icon("goto")}<b class="bold">定位到...</b><i class="vl"></i><b class="bold">日期范围</b>${icon("down", "s16")}<i class="vl"></i>
              <span class="dim">EMA</span><span class="dim">清算热力图</span><i class="vl"></i>
              <span class="blue">Volume</span><span class="blue">MACD</span>${icon("editBox", "s16 dim")}<b class="bold dim">社区指标</b>
              <span class="dim">对数</span><span class="dim">%</span><span class="blue bold">自动</span>
            </div>
            <div class="lrow2">
              ${PERIODS2.map((p) => html`<span>${p}</span>`)}<span class="lcur">1月</span><span>季K</span><span>年K</span>
              ${icon("close", "s10")}
            </div>
            <div class="grip"><svg viewBox="0 0 10 5"><path fill="#878b95" d="M0 5L5 0L10 5Z"/></svg></div>
          </section>
          <section class="btabs panel">
            ${["委单区", "自定义指标/回测/实盘", "AI 网格", "现货DCA", "组合下单", "跟单面板", "AI分析"].map((t) => html`<div class="btab">${t}</div>`)}
            <div class="btools">${icon("up", "s18")}${icon("expandBox", "s18")}</div>
          </section>
        </main>

        <aside class="side">
          ${["rList", "rDoc", "rMoney", "rTrend", "rScreen"].map((n) => html`<div class="si">${icon(n)}</div>`)}
          <div class="si"><div class="etf"><span>ETF</span></div></div>
          <div class="si">${icon("rRobot")}</div>
          <i class="split"></i>
          <div class="si">${icon("rSwap")}</div><div class="gap"></div>
          <div class="si">${icon("windows")}</div><div class="si">${icon("rHead")}</div><div class="si">${icon("rFace")}</div>
        </aside>

        <footer class="status row">
          <span>资产(₮)</span><span class="blue">多账户资产分析</span>${icon("marker", "s16 dim")}
          <span>CME比特币期货CFD-雅虎</span><span class="g">+1.17%</span><span>79,910.0</span>
          <span class="pill">主力</span><span>BTC主力24H挂单</span><span class="amber">34.47亿元</span>
          ${icon("wifi")}<span>线路3 :</span><span class="g">优</span><span class="clock">SGT 08-25 09:40:35</span>
        </footer>
      </div>
    </div>
    <div class="mark"><svg viewBox="0 0 27 29"><path fill="#e3e3e3" d="M13.5 0L20.5 7L17.5 10L13.5 6L9.5 10L6.5 7ZM13.5 29L20.5 22L17.5 19L13.5 23L9.5 19L6.5 22ZM13.5 11L17 14.5L13.5 18L10 14.5ZM3.5 11L7 14.5L3.5 18L0 14.5ZM23.5 11L27 14.5L23.5 18L20 14.5Z"/></svg><span>@陈大炮_</span></div>`;
  }
}
